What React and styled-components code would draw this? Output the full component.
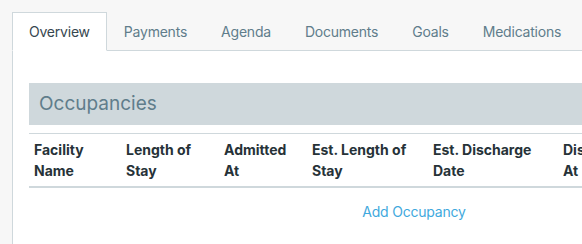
import React from 'react';
import styled, { createGlobalStyle } from 'styled-components';

const GlobalStyle = createGlobalStyle`
  html, body {
    margin: 0;
    padding: 0;
    background: #f7f7f7;
    overflow: hidden;
  }
  body {
    font-family: Inter, 'Noto Sans', sans-serif;
    font-size: 14px;
    line-height: 1.5;
    -webkit-font-smoothing: antialiased;
  }
`;

const Page = styled.div`
  padding: 12px 0 0 12px;
  width: 900px;
`;

const TabList = styled.ul`
  display: flex;
  list-style: none;
  margin: 0;
  padding: 0;
  border-bottom: 1px solid #cfd8dc;
`;

const Tab = styled.li`
  padding: 0 16px;
  height: 37px;
  display: flex;
  align-items: center;
  letter-spacing: -0.22px;
  border: 1px solid ${(p) => (p.$active ? '#cfd8dc' : 'transparent')};
  border-bottom-color: ${(p) => (p.$active ? '#fff' : 'transparent')};
  margin-bottom: -1px;
  background: ${(p) => (p.$active ? '#fff' : 'transparent')};
  color: ${(p) => (p.$active ? '#37474f' : '#607d8b')};
  cursor: pointer;
`;

const Panel = styled.div`
  background: #fff;
  border-left: 1px solid #cfd8dc;
  padding: 32px 16px 40px;
  width: 770px;
`;

const SectionHeader = styled.h2`
  margin: 0 0 8px;
  background: #cfd8dc;
  color: #607d8b;
  font-size: 19px;
  font-weight: 400;
  line-height: 42px;
  padding: 0 10px;
`;

const Table = styled.table`
  width: 100%;
  border-collapse: collapse;
  table-layout: fixed;
  border-top: 1px solid #cfd8dc;
`;

const HeadCell = styled.th`
  box-sizing: border-box;
  text-align: left;
  vertical-align: bottom;
  font-weight: 700;
  color: #263238;
  padding: 4.8px 5px;
  border-bottom: 2px solid #cfd8dc;
  width: ${(p) => p.$w}px;
`;

const AddLink = styled.a`
  display: block;
  text-align: center;
  margin-top: 13px;
  letter-spacing: -0.2px;
  color: #3fa9dd;
  text-decoration: none;
  cursor: pointer;
`;

const tabs = ['Overview', 'Payments', 'Agenda', 'Documents', 'Goals', 'Medications'];

const columns = [
  { label: 'Facility Name', w: 92 },
  { label: 'Length of Stay', w: 98 },
  { label: 'Admitted At', w: 88 },
  { label: 'Est. Length of Stay', w: 121 },
  { label: 'Est. Discharge Date', w: 130 },
  { label: 'Discharged At', w: 96 },
  { label: '', w: 145 },
];

const App = () => (
  <>
    <GlobalStyle />
    <Page>
      <TabList>
        {tabs.map((t, i) => (
          <Tab key={t} $active={i === 0}>{t}</Tab>
        ))}
      </TabList>
      <Panel>
        <SectionHeader>Occupancies</SectionHeader>
        <Table>
          <thead>
            <tr>
              {columns.map((c, i) => (
                <HeadCell key={i} $w={c.w}>{c.label}</HeadCell>
              ))}
            </tr>
          </thead>
        </Table>
        <AddLink>Add Occupancy</AddLink>
      </Panel>
    </Page>
  </>
);

export default App;
